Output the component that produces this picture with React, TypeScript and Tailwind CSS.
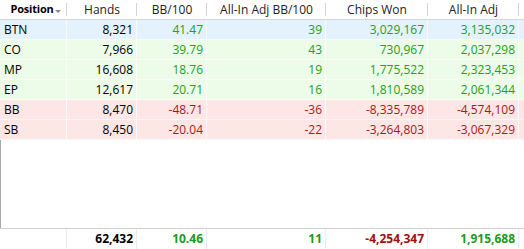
const columns = [
  { key: 'position', label: 'Position', width: 'w-[67px]' },
  { key: 'hands', label: 'Hands', width: 'w-[70px]' },
  { key: 'bb', label: 'BB/100', width: 'w-[70px]' },
  { key: 'adjBb', label: 'All-In Adj BB/100', width: 'w-[119px]' },
  { key: 'chips', label: 'Chips Won', width: 'w-[102px]' },
  { key: 'adj', label: 'All-In Adj', width: 'w-[91px]' },
];

const rows = [
  { pos: 'BTN', hands: '8,321', bb: '41.47', adjBb: '39', chips: '3,029,167', adj: '3,135,032', tone: 'blue' },
  { pos: 'CO', hands: '7,966', bb: '39.79', adjBb: '43', chips: '730,967', adj: '2,037,298', tone: 'green' },
  { pos: 'MP', hands: '16,608', bb: '18.76', adjBb: '19', chips: '1,775,522', adj: '2,323,453', tone: 'green' },
  { pos: 'EP', hands: '12,617', bb: '20.71', adjBb: '16', chips: '1,810,589', adj: '2,061,344', tone: 'green' },
  { pos: 'BB', hands: '8,470', bb: '-48.71', adjBb: '-36', chips: '-8,335,789', adj: '-4,574,109', tone: 'red' },
  { pos: 'SB', hands: '8,450', bb: '-20.04', adjBb: '-22', chips: '-3,264,803', adj: '-3,067,329', tone: 'red' },
];

const toneBg: Record<string, string> = {
  blue: 'bg-[#e3f2fc]',
  green: 'bg-[#edfbe9]',
  red: 'bg-[#fde6e6]',
};

const valueColor = (v: string) => (v.startsWith('-') ? 'text-[#b01515]' : 'text-[#22a022]');

const App = () => {
  return (
    <div
      className="w-[524px] h-[249px] bg-white flex flex-col text-[12px] text-black overflow-hidden"
      style={{ fontFamily: '"Open Sans", "Noto Sans", sans-serif' }}
    >
      {/* Header */}
      <div className="flex h-[20px] border-b border-[#d8d8d8] shrink-0">
        {columns.map((col, i) => (
          <div key={col.key} className={`${col.width} flex items-center justify-center relative`}>
            {i === 0 ? (
              <span className="flex items-center font-bold text-[11px] tracking-[-0.2px] pl-1">
                {col.label}
                <span className="ml-[1px] mt-[3px] w-0 h-0 border-l-[3px] border-r-[3px] border-t-[3px] border-l-transparent border-r-transparent border-t-[#8a8a8a]" />
              </span>
            ) : (
              <span className="text-[#222]">{col.label}</span>
            )}
            <span className="absolute right-0 top-[3px] bottom-[3px] w-px bg-[#d5d5d5]" />
          </div>
        ))}
      </div>

      {/* Rows */}
      <div className="flex-1 border-l border-[#a8a8a8] flex flex-col">
        {rows.map((r) => (
          <div key={r.pos} className={`flex h-[20px] -ml-px border-b border-white/60 ${toneBg[r.tone]}`}>
            <div className="w-[67px] pl-1 flex items-center border-r border-white/70">{r.pos}</div>
            <div className="w-[70px] pr-[3px] flex items-center justify-end border-r border-white/70">{r.hands}</div>
            <div className={`w-[70px] pr-[3px] flex items-center justify-end border-r border-white/70 ${valueColor(r.bb)}`}>{r.bb}</div>
            <div className={`w-[119px] pr-[3px] flex items-center justify-end border-r border-white/70 ${valueColor(r.adjBb)}`}>{r.adjBb}</div>
            <div className={`w-[102px] pr-[3px] flex items-center justify-end border-r border-white/70 ${valueColor(r.chips)}`}>{r.chips}</div>
            <div className={`w-[91px] pr-[3px] flex items-center justify-end border-r border-white/70 ${valueColor(r.adj)}`}>{r.adj}</div>
            <div className="flex-1" />
          </div>
        ))}
      </div>

      {/* Totals */}
      <div className="flex h-[21px] border-t border-[#d0d0d0] font-bold shrink-0">
        <div className="w-[67px] border-r border-[#ececec]" />
        <div className="w-[70px] pr-[3px] flex items-center justify-end border-r border-[#ececec]">62,432</div>
        <div className="w-[70px] pr-[3px] flex items-center justify-end border-r border-[#ececec] text-[#1c9a1c]">10.46</div>
        <div className="w-[119px] pr-[3px] flex items-center justify-end border-r border-[#ececec] text-[#1c9a1c]">11</div>
        <div className="w-[102px] pr-[3px] flex items-center justify-end border-r border-[#ececec] text-[#a30d0d]">-4,254,347</div>
        <div className="w-[91px] pr-[3px] flex items-center justify-end border-r border-[#ececec] text-[#1c9a1c]">1,915,688</div>
        <div className="flex-1" />
      </div>
    </div>
  );
};

export default App;
